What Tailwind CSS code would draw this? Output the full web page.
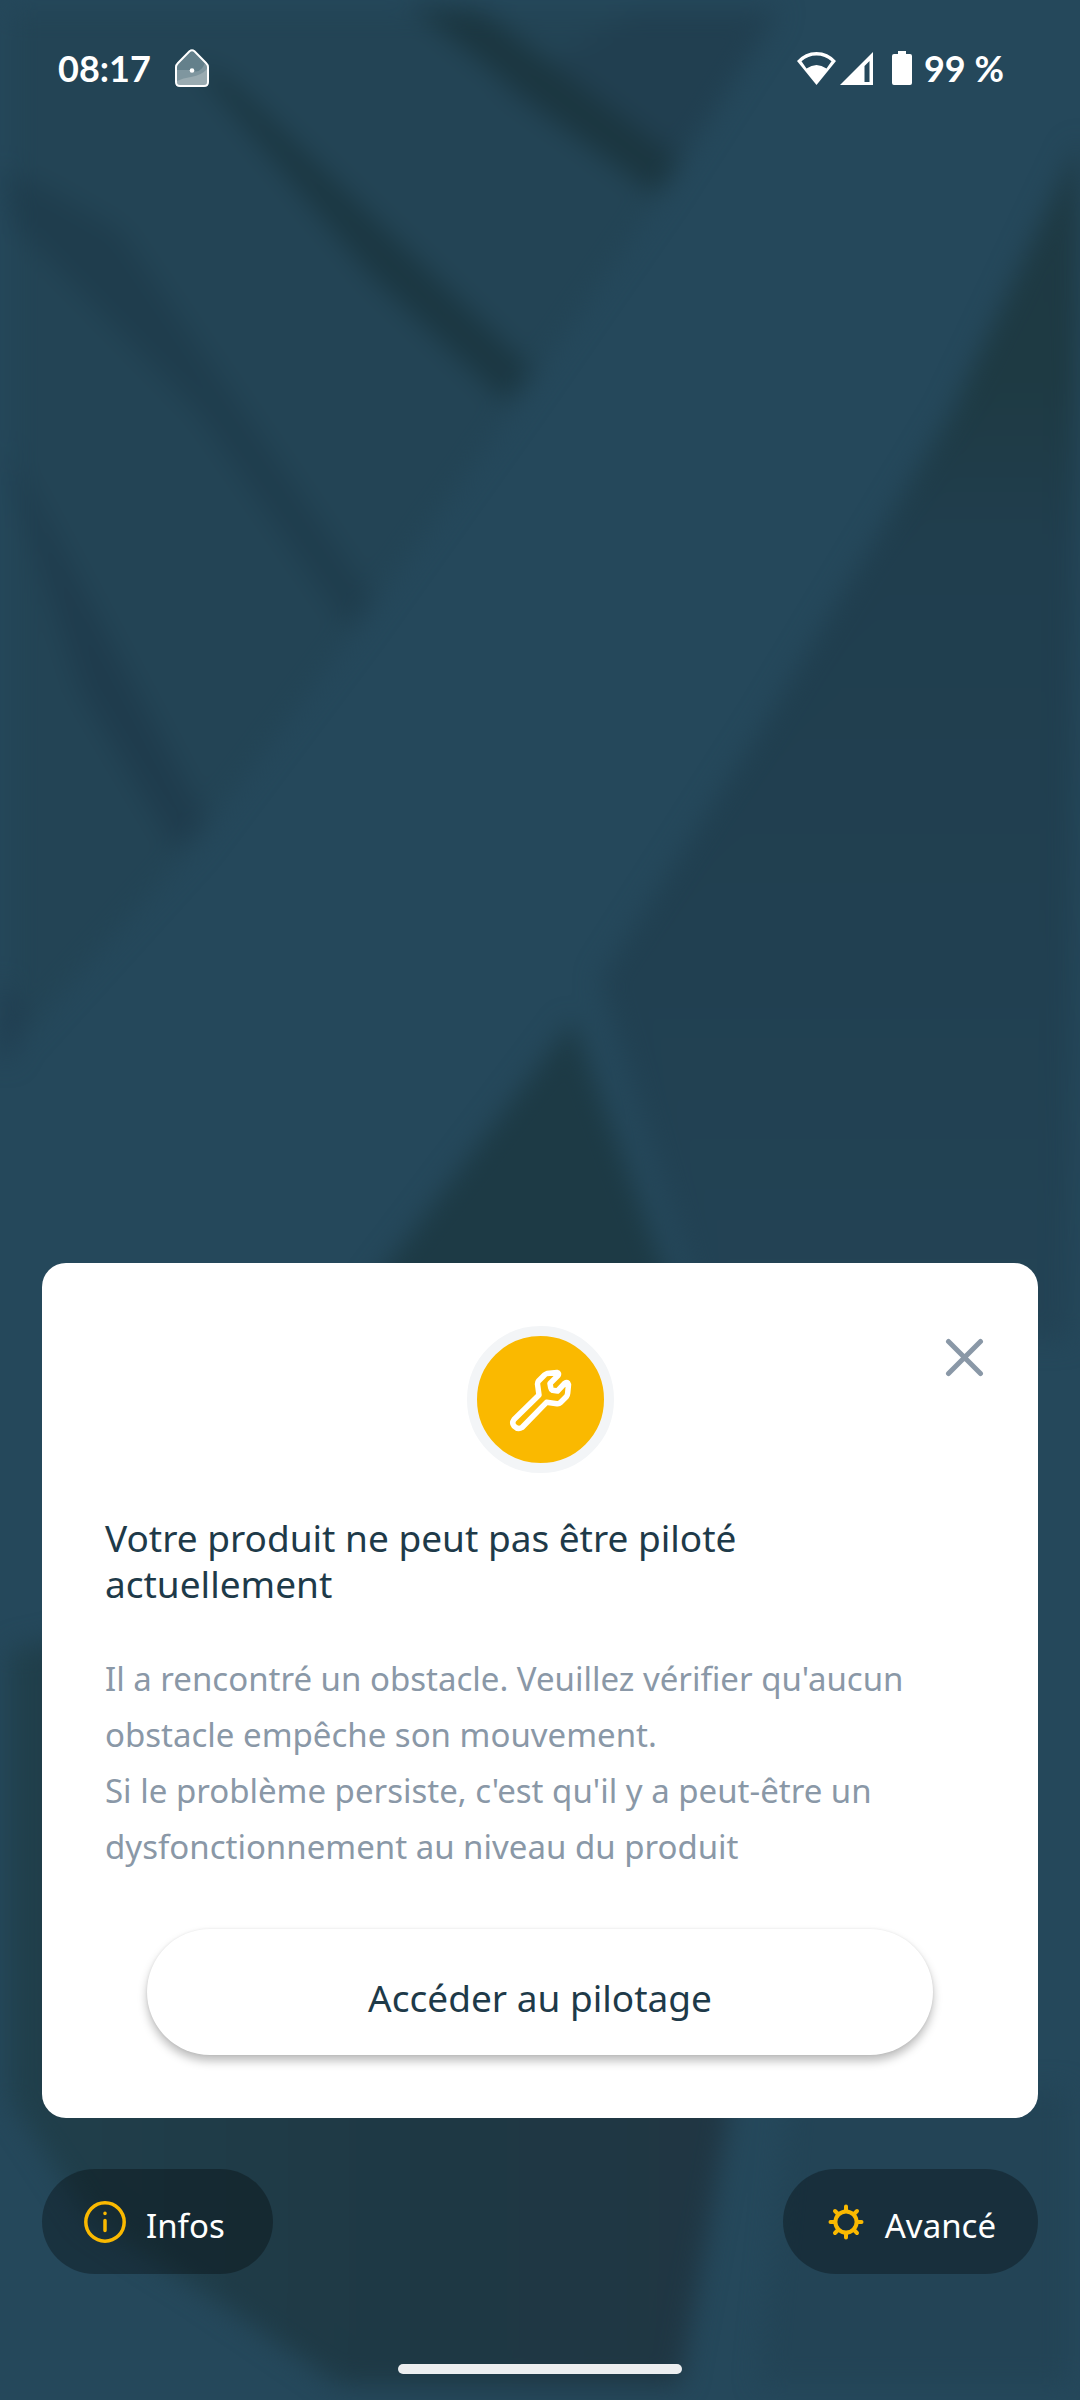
<!DOCTYPE html>
<html lang="fr">
<head>
<meta charset="utf-8">
<meta name="viewport" content="width=device-width, initial-scale=1">
<title>Pilotage</title>
<script src="https://cdn.jsdelivr.net/npm/@tailwindcss/browser@4"></script>
</head>
<body class="relative flex min-h-screen flex-col overflow-x-hidden bg-[#25485b] font-['Noto_Sans',sans-serif]">
  <!-- Blurred backdrop -->
  <svg class="absolute inset-0 -z-10 h-full w-full" viewBox="0 0 1080 2400" preserveAspectRatio="xMidYMid slice" aria-hidden="true">
    <defs>
      <filter id="soft" x="-20%" y="-20%" width="140%" height="140%" color-interpolation-filters="sRGB"><feGaussianBlur stdDeviation="13"/></filter>
      <linearGradient id="right" x1="0" y1="0" x2="0" y2="1">
        <stop offset="0" stop-color="#1e3943"/><stop offset=".2" stop-color="#1e3a43"/><stop offset=".34" stop-color="#203e4e"/><stop offset=".7" stop-color="#214051"/><stop offset="1" stop-color="#234355"/>
      </linearGradient>
      <linearGradient id="base" x1="0" y1="0" x2="1" y2="0">
        <stop offset="0" stop-color="#203f4b"/><stop offset=".6" stop-color="#1e3844"/><stop offset="1" stop-color="#203643"/>
      </linearGradient>
    </defs>
    <rect width="1080" height="2400" fill="#25485b"/>
    <g filter="url(#soft)">
      <path d="M10 10H780L665 190 520 400 360 625 195 845 10 1050Z" fill="#234455"/>
      <path d="M640 10H780L660 190 500 90Z" fill="#213f50"/>
      <path d="M410 5 480 10 680 160 655 195 560 125Z" fill="#1b3640"/>
      <path d="M190 60 230 80 533 370 505 402 370 275Z" fill="#1b3742"/>
      <path d="M5 170 50 190 120 230 373 600 347 628 200 415 10 220Z" fill="#1f3d4d"/>
      <path d="M5 450 25 480 206 820 175 850 80 690Z" fill="#1f3c4d"/>
      <path d="M0 980 25 1010 10 1060H0Z" fill="#203d50"/>
      <path d="M1080 140 950 415 760 730 600 980 710 1340H1072Z" fill="url(#right)"/>
      <path d="M573 1020 330 1340H690Z" fill="#1d3a45"/>
      <path d="M10 1650 700 1500 728 2118 680 2385H340L200 2290 90 2220 10 2100Z" fill="url(#base)"/>
      <path d="M790 2090H1070V2385H760Z" fill="#234456"/>
    </g>
  </svg>

  <!-- Status bar -->
  <header class="flex h-34 items-center justify-between pr-[76px] pl-[58px] font-['Lato',sans-serif] text-[36px] font-bold text-white">
    <div class="flex items-center gap-[24px]">
      <time>08:17</time>
      <svg class="h-[38px] w-[34px]" viewBox="0 0 34 38" role="img" aria-label="Maison">
        <path d="M14.5 2.2Q17 .3 19.500 2.200L31 14Q33 16 33 18V33Q33 37 29 37H5Q1 37 1 33V18Q1 16 3 14Z" fill="#64808b"/>
        <path d="M2 21H16Q25 26 30 14L32 18V33Q32 36 29 36H5Q2 36 2 33Z" fill="#7f969f"/>
        <path d="M2 32Q8 29 16 28 27 26 32 20V33Q32 36 29 36H5Q2 36 2 33Z" fill="#9aabb1"/>
        <path d="M14.5 2.200Q17 .3 19.500 2.200L31 14Q33 16 33 18V33Q33 37 29 37H5Q1 37 1 33V18Q1 16 3 14Z" fill="none" stroke="#fff" stroke-width="2"/>
        <circle cx="17" cy="21.500" r="2.300" fill="#fff"/>
      </svg>
    </div>
    <div class="flex items-center">
      <svg class="mr-1 h-[33px] w-[39px]" viewBox="0 0 39 33" role="img" aria-label="Wi-Fi">
        <path fill-rule="evenodd" d="M0 9Q8 0 19.500 0T39 9L19.500 33ZM4.500 9.300 9.500 16.500Q19.500 9.500 29.500 16.500L34.500 9.300Q28 3.500 19.500 3.500T4.500 9.300Z" fill="#fff"/>
      </svg>
      <svg class="mr-[19px] h-[33px] w-[33px]" viewBox="0 0 33 33" role="img" aria-label="Réseau mobile">
        <path fill-rule="evenodd" d="M33 0V33H0ZM29.500 9 24.500 14V30H29.500Z" fill="#fff"/>
      </svg>
      <svg class="mr-3 h-[34px] w-5" viewBox="0 0 20 34" role="img" aria-label="Batterie">
        <path d="M6 0H14V3H18Q20 3 20 5V32Q20 34 18 34H2Q0 34 0 32V5Q0 3 2 3H6Z" fill="#fff"/>
      </svg>
      <span>99 %</span>
    </div>
  </header>

  <main class="mt-auto flex flex-col gap-[51px] px-[42px]">
    <section class="relative flex flex-col rounded-[24px] bg-white px-[63px] pt-[63px] pb-[63px]" aria-labelledby="title">
      <button type="button" aria-label="Fermer" class="absolute top-[67px] right-[46px] p-2">
        <svg class="h-[39px] w-[39px]" viewBox="0 0 39 39" fill="none" stroke="#8a98a7" stroke-width="5" stroke-linecap="round"><path d="M3.500 3.500 35.500 35.500M35.500 3.500 3.500 35.500"/></svg>
      </button>
      <div class="flex size-[147px] items-center justify-center self-center rounded-full border-[10px] border-[#f3f5f7] bg-[#fab900]">
        <svg class="size-[66px]" viewBox="507 1366 66 66" fill="none" stroke="#fff" stroke-width="5.500" stroke-linejoin="round" aria-hidden="true">
          <path d="M557 1371.500 547 1372.500Q545.500 1373 544.500 1374L538.500 1380Q537.500 1381.300 537.500 1383L539 1394 514 1418.500Q511.500 1422 514 1425 518 1429 522 1426.500L546.500 1401.300 557 1402.700Q559 1403 560.500 1401.500L566.500 1395.500Q567.500 1394 567.700 1392L568.500 1383.500Q567.500 1380.500 565 1382L557.500 1390 552.500 1389.300Q551 1388.500 550.800 1387L550 1382.500 558 1374.500Q559.500 1372 557 1371.500Z"/>
        </svg>
      </div>
      <h1 id="title" class="mt-[42px] pr-[42px] text-[37px] leading-[46px] text-[#1e3a49]">Votre produit ne peut pas être piloté actuellement</h1>
      <p class="mt-[44px] text-[33px] leading-[56px] text-[#8a98a7]">Il a rencontré un obstacle. Veuillez vérifier qu'aucun obstacle empêche son mouvement.<br>Si le problème persiste, c'est qu'il y a peut-être un dysfonctionnement au niveau du produit</p>
      <button type="button" class="mx-[42px] mt-[54px] h-[126px] rounded-full bg-white pt-3 text-[37px] text-[#1e3a49] shadow-[0_6px_10px_rgba(0,0,0,0.26),0_0_3px_rgba(0,0,0,0.08)]">Accéder au pilotage</button>
    </section>

    <nav class="flex items-center justify-between text-[33px] text-white">
      <button type="button" class="flex h-[105px] items-center gap-[20px] rounded-full bg-black/30 pr-[48px] pl-[42px]">
        <svg class="size-[42px]" viewBox="0 0 42 42" fill="none" stroke="#fab900" stroke-width="3.500" stroke-linecap="round" aria-hidden="true"><circle cx="21" cy="21" r="19.200"/><path d="M21 19.500V29.500M21 12.300V12.400"/></svg>
        <span class="pt-2">Infos</span>
      </button>
      <button type="button" class="flex h-[105px] items-center gap-[18px] rounded-full bg-black/30 pr-[42px] pl-[42px]">
        <svg class="size-[42px]" viewBox="0 0 42 42" fill="none" stroke="#fab900" stroke-width="4" stroke-linecap="round" aria-hidden="true"><circle cx="21" cy="21" r="10.600"/><path d="M21 9.500V5.500M21 32.500V36.500M9.500 21H5.500M32.500 21H36.500M12.500 12.500 10 10M29.500 12.500 32 10M12.500 29.500 10 32M29.500 29.500 32 32"/></svg>
        <span class="pt-2">Avancé</span>
      </button>
    </nav>
  </main>

  <footer class="flex justify-center pt-[90px] pb-[26px]"><div class="h-[10px] w-[284px] rounded-full bg-[#eceef0]"></div></footer>
</body>
</html>
